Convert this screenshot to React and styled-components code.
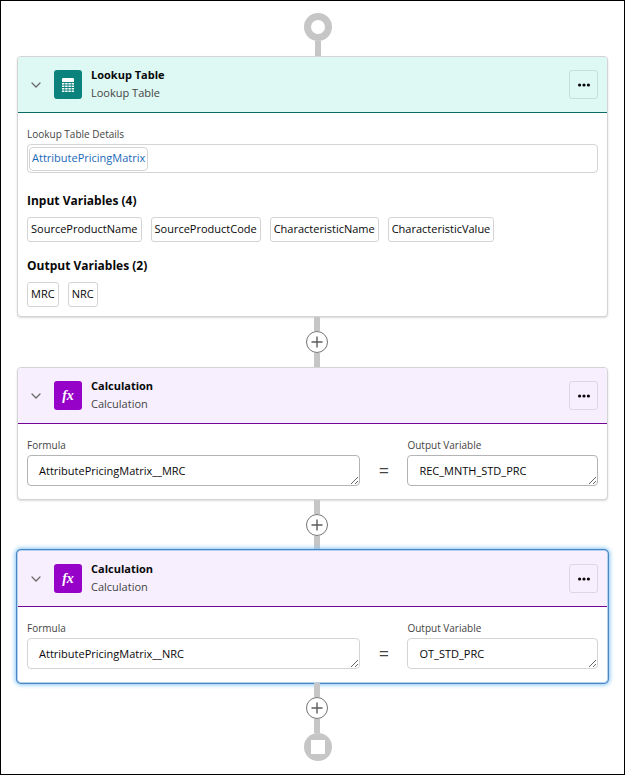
import styled, { createGlobalStyle } from "styled-components"
import { useId, useState } from "react"

const themes = {
	lookup: { header: "#def8f3", line: "#0b6b66", icon: "#0b827c" },
	calculation: { header: "#f7effe", line: "#730394", icon: "#9602c7" },
}

const inputVariables = ["SourceProductName", "SourceProductCode", "CharacteristicName", "CharacteristicValue"]
const outputVariables = ["MRC", "NRC"]

const TableIcon = () => (
	<svg width="12" height="14" viewBox="0 0 12 14" fill="white" aria-hidden="true">
		<path d="M0 4V1.2Q0 0 1.2 0h9.6Q12 0 12 1.2V4z" />
		{[5, 7.5, 10, 12.5].map((y) => (
			[0, 3.2, 6.4, 9.6].map((x) => <rect key={`${x}-${y}`} x={x} y={y} width="2.4" height="1.5" />)
		))}
	</svg>
)

const ElementCard = ({ kind, title, subtitle, selected, children }) => {
	const [open, setOpen] = useState(true)

	return (
		<Card $selected={selected}>
			<Header $theme={themes[kind]}>
				<Toggle type="button" aria-label="Toggle details" aria-expanded={open} onClick={() => setOpen(!open)}>
					<svg width="10" height="6" viewBox="0 0 10 6" fill="none" stroke="#6b6b6b" strokeWidth="1.3" strokeLinecap="round">
						<path d="M1 1l4 4 4-4" />
					</svg>
				</Toggle>
				<IconTile $color={themes[kind].icon}>
					{kind === "lookup" ? <TableIcon /> : <Fx>fx</Fx>}
				</IconTile>
				<Titles>
					<Title>{title}</Title>
					<Subtitle>{subtitle}</Subtitle>
				</Titles>
				<MenuButton type="button" aria-label="More actions">
					<svg width="14" height="4" viewBox="0 0 14 4" fill="#080808">
						<circle cx="2.6" cy="2" r="1.6" />
						<circle cx="7" cy="2" r="1.6" />
						<circle cx="11.4" cy="2" r="1.6" />
					</svg>
				</MenuButton>
			</Header>
			{open && children}
		</Card>
	)
}

const Variables = ({ title, names }) => (
	<Section>
		<SectionTitle>{title} ({names.length})</SectionTitle>
		<Chips>
			{names.map((name) => <Chip key={name}>{name}</Chip>)}
		</Chips>
	</Section>
)

const Calculation = ({ formula, output, selected }) => {
	const id = useId()

	return (
		<ElementCard kind="calculation" title="Calculation" subtitle="Calculation" selected={selected}>
			<FormulaRow>
				<Field $grow={7}>
					<Label htmlFor={`${id}-formula`}>Formula</Label>
					<TextArea id={`${id}-formula`} rows={1} defaultValue={formula} $light={selected} spellCheck={false} />
				</Field>
				<Equals>=</Equals>
				<Field $grow={4}>
					<Label htmlFor={`${id}-output`}>Output Variable</Label>
					<TextArea id={`${id}-output`} rows={1} defaultValue={output} $light={selected} spellCheck={false} />
				</Field>
			</FormulaRow>
		</ElementCard>
	)
}

const AddStep = () => (
	<Connector>
		<Stem />
		<AddButton type="button" aria-label="Add element">
			<svg width="12" height="12" viewBox="0 0 12 12" stroke="#5c5c5c" strokeWidth="1.4">
				<path d="M6 0.5v11M0.5 6h11" />
			</svg>
		</AddButton>
		<Stem />
	</Connector>
)

const App = () => {
	return (
		<Page>
			<GlobalStyle />
			<Terminal>
				<Start />
				<Stem />
			</Terminal>
			<ElementCard kind="lookup" title="Lookup Table" subtitle="Lookup Table">
				<LookupBody>
					<Label as="span">Lookup Table Details</Label>
					<LookupBox>
						<LookupLink href="#AttributePricingMatrix">AttributePricingMatrix</LookupLink>
					</LookupBox>
					<Variables title="Input Variables" names={inputVariables} />
					<Variables title="Output Variables" names={outputVariables} />
				</LookupBody>
			</ElementCard>
			<AddStep />
			<Calculation formula="AttributePricingMatrix__MRC" output="REC_MNTH_STD_PRC" />
			<AddStep />
			<Calculation formula="AttributePricingMatrix__NRC" output="OT_STD_PRC" selected />
			<AddStep />
			<Terminal>
				<End />
			</Terminal>
		</Page>
	)
}

const GlobalStyle = createGlobalStyle`
	* {
		box-sizing: border-box;
	}

	body {
		margin: 0;
		background: white;
		color: #080808;
		font-family: "Segoe UI", "Open Sans", "Noto Sans", sans-serif;
		font-size: 11px;
		line-height: 18px;
	}

	button, textarea {
		font: inherit;
		color: inherit;
	}
`

const Page = styled.main`
	display: flex;
	flex-direction: column;
	min-height: 100vh;
	padding: 12px 16px;
	border: 1px solid black;
`

const Connector = styled.div`
	display: flex;
	flex-direction: column;
	align-items: center;
	height: 50px;
	padding-left: 8px;
`

const Terminal = styled.div`
	display: flex;
	flex-direction: column;
	align-items: center;
	padding-left: 10px;

	&:first-of-type {
		height: 43px;
	}
`

const Stem = styled.div`
	flex: 1;
	width: 6px;
	background: #c6c6c6;
`

const Start = styled.div`
	width: 28px;
	height: 28px;
	border: 7px solid #c6c6c6;
	border-radius: 50%;
`

const End = styled.div`
	display: flex;
	align-items: center;
	justify-content: center;
	width: 28px;
	height: 28px;
	border-radius: 50%;
	background: #c6c6c6;

	&::before {
		content: "";
		width: 14px;
		height: 14px;
		background: white;
	}
`

const AddButton = styled.button`
	display: flex;
	align-items: center;
	justify-content: center;
	width: 22px;
	height: 22px;
	padding: 0;
	border: 1px solid #747474;
	border-radius: 50%;
	background: white;
`

const Card = styled.section`
	border: 1px solid ${(props) => (props.$selected ? "#b4d2f0" : "#d4d4d4")};
	border-radius: 4px;
	background: white;
	box-shadow: ${(props) => (props.$selected ? "0 0 0 1px #4a86c4, 0 0 4px 2px #86c5f5" : "0 1px 2px rgba(0, 0, 0, .15)")};
`

const Header = styled.header`
	display: flex;
	align-items: center;
	gap: 9px;
	height: 56px;
	padding: 0 9px;
	border-bottom: 1px solid ${(props) => props.$theme.line};
	border-radius: 3px 3px 0 0;
	background: ${(props) => props.$theme.header};
`

const Toggle = styled.button`
	display: flex;
	align-items: center;
	justify-content: center;
	width: 18px;
	height: 18px;
	padding: 0;
	border: none;
	background: none;
`

const IconTile = styled.span`
	display: flex;
	align-items: center;
	justify-content: center;
	width: 28px;
	height: 29px;
	border-radius: 3px;
	background: ${(props) => props.$color};
`

const Fx = styled.span`
	font-family: "Liberation Serif", serif;
	font-size: 14px;
	font-style: italic;
	font-weight: 700;
	line-height: 15px;
	color: white;
`

const Titles = styled.div`
	flex: 1;
	padding-bottom: 2px;
`

const Title = styled.h2`
	margin: 0;
	font-size: 11px;
	font-weight: 700;
`

const Subtitle = styled.p`
	margin: 0;
	color: #444;
`

const MenuButton = styled.button`
	display: flex;
	align-items: center;
	justify-content: center;
	width: 29px;
	height: 29px;
	padding: 0;
	border: 1px solid rgba(0, 0, 0, .1);
	border-radius: 3px;
	background: none;
`

const LookupBody = styled.div`
	padding: 12px 9px 9px;
`

const Label = styled.label`
	display: block;
	font-size: 10px;
	color: #444;
`

const LookupBox = styled.div`
	display: flex;
	align-items: center;
	height: 29px;
	margin: 1px 0 19px;
	padding: 0 1px;
	border: 1px solid #d4d4d4;
	border-radius: 4px;
`

const LookupLink = styled.a`
	padding: 1px 2px 3px;
	border: 1px solid #d4d4d4;
	border-radius: 4px;
	color: #1b69b6;
	text-decoration: none;
`

const Section = styled.section`
	& + & {
		margin-top: 15px;
	}
`

const SectionTitle = styled.h3`
	margin: 0 0 7px;
	font-size: 12px;
	font-weight: 700;
`

const Chips = styled.div`
	display: flex;
	flex-wrap: wrap;
	gap: 9px;
`

const Chip = styled.span`
	padding: 2px 3px 3px;
	border: 1px solid #d4d4d4;
	border-radius: 3px;
`

const FormulaRow = styled.div`
	display: flex;
	align-items: flex-end;
	padding: 12px 9px 13px;
`

const Field = styled.div`
	flex: ${(props) => props.$grow} 1 0;
	min-width: 0;
`

const TextArea = styled.textarea`
	display: block;
	width: 100%;
	height: 31px;
	margin-top: 1px;
	padding: 6px 11px;
	border: 1px solid ${(props) => (props.$light ? "#d4d4d4" : "#b4b4b4")};
	border-radius: 4px;
	background: white;
	overflow: hidden;
	resize: both;
`

const Equals = styled.span`
	width: 47px;
	font-size: 18px;
	line-height: 31px;
	text-align: center;
	color: #444;
`

export default App
